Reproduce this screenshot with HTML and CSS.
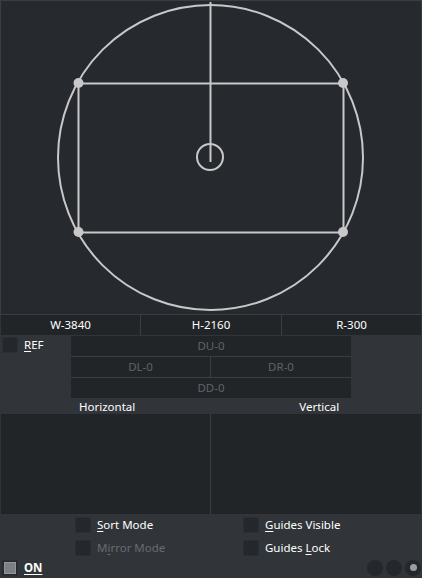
FILE: index.html
```html
<!DOCTYPE html>
<html>
<head>
<meta charset="utf-8">
<link rel="stylesheet" href="styles.css">
</head>
<body>
<div class="panel">
  <div class="canvas">
    <svg width="420" height="313" viewBox="1 1 420 313">
      <g fill="none" stroke="#c8c8c8" stroke-width="2">
        <circle cx="210.5" cy="157.5" r="152.5"/>
        <rect x="78.5" y="83.5" width="265" height="149"/>
        <line x1="210.5" y1="2" x2="210.5" y2="162"/>
        <circle cx="210" cy="157" r="13"/>
      </g>
      <g fill="#c8c8c8">
        <circle cx="78.5" cy="83" r="5"/>
        <circle cx="343" cy="83" r="5"/>
        <circle cx="78.5" cy="232" r="5"/>
        <circle cx="343" cy="232" r="5"/>
      </g>
    </svg>
  </div>
  <div class="dims">
    <div class="dim">W-3840</div>
    <div class="dim">H-2160</div>
    <div class="dim">R-300</div>
  </div>
  <div class="refrow">
    <div class="refcheck">
      <span class="box"></span>
      <span class="lbl"><u>R</u>EF</span>
    </div>
    <div class="offsets">
      <div class="off wide">DU-0</div>
      <div class="off">DL-0</div>
      <div class="off">DR-0</div>
      <div class="off wide">DD-0</div>
    </div>
  </div>
  <div class="heads">
    <div class="head h1">Horizontal</div>
    <div class="head h2">Vertical</div>
  </div>
  <div class="lists">
    <div class="list"></div>
    <div class="list"></div>
  </div>
  <div class="opts">
    <div class="opt"><span class="box"></span><span class="lbl"><u>S</u>ort Mode</span></div>
    <div class="opt"><span class="box"></span><span class="lbl"><u>G</u>uides Visible</span></div>
    <div class="opt"><span class="box"></span><span class="lbl dis">M<u>i</u>rror Mode</span></div>
    <div class="opt"><span class="box"></span><span class="lbl">Guides <u>L</u>ock</span></div>
  </div>
  <div class="bottom">
    <div class="on"><span class="box onbox"><span class="fill"></span></span><span class="lbl bold"><u>ON</u></span></div>
    <div class="dots">
      <span class="dot"></span>
      <span class="dot"></span>
      <span class="dot"><span class="pip"></span></span>
    </div>
  </div>
</div>
</body>
</html>
```
FILE: styles.css
```css
* { box-sizing: border-box; }
html, body { margin: 0; padding: 0; }
body {
  background: #31353a;
  font-family: "Noto Sans", "Open Sans", sans-serif;
  font-size: 11.5px;
  color: #ffffff;
  width: 422px;
  height: 578px;
  overflow: hidden;
}
.panel { width: 422px; height: 578px; display: flex; flex-direction: column; }
.canvas {
  height: 316px;
  background: #26292e;
  border: 1px solid #3a3e44;
}
.canvas svg { display: block; }
.dims {
  display: grid;
  grid-template-columns: 139px 140px 139px;
  gap: 1px;
  height: 20px;
  margin: 0 1px;
  background: #3a3e44;
}
.dim {
  background: #222528;
  text-align: center;
  line-height: 20px;
}
.refrow { display: flex; height: 63px; padding-top: 1px; }
.refcheck { width: 71px; display: flex; align-items: flex-start; padding: 1px 0 0 2px; }
.box {
  display: inline-block;
  width: 16px;
  height: 16px;
  background: #24272b;
  border: 1px solid #2b2e32;
  flex: none;
}
.refcheck .lbl { margin-left: 6px; line-height: 16px; }
.offsets {
  width: 280px;
  display: grid;
  grid-template-columns: 139px 140px;
  gap: 1px;
  background: #3a3e44;
}
.off {
  background: #222528;
  color: #5f6368;
  text-align: center;
  line-height: 20px;
  height: 20px;
}
.off.wide { grid-column: 1 / 3; }
.heads { display: flex; height: 16px; line-height: 17px; }
.head.h1 { margin-left: 79px; }
.head.h2 { margin-left: 164px; }
.lists {
  display: grid;
  grid-template-columns: 209px 210px;
  gap: 1px;
  margin: 0 1px;
  height: 100px;
  background: #3a3e44;
}
.list { background: #222528; }
.opts {
  display: grid;
  grid-template-columns: 168px 170px;
  row-gap: 5px;
  padding: 3px 0 0 75px;
  height: 43px;
}
.opt { display: flex; align-items: center; height: 16px; }
.opt .lbl { margin-left: 6px; line-height: 16px; }
.dis { color: #676b70; }
.bottom { display: flex; justify-content: space-between; align-items: center; height: 21px; padding: 0 1px 0 2px; }
.on { display: flex; align-items: center; }
.onbox { display: flex; align-items: center; justify-content: center; background: #24272b; }
.onbox .fill { width: 12px; height: 12px; background: #7c7f83; border: 1px solid #95989c; }
.bold { font-weight: bold; margin-left: 6px; }
.dots { display: flex; gap: 3px; }
.dot {
  width: 16px; height: 16px; border-radius: 50%;
  background: #24272b;
  display: flex; align-items: center; justify-content: center;
}
.pip { width: 7px; height: 7px; border-radius: 50%; background: #9a9da1; }
u { text-decoration-thickness: 1px; text-underline-offset: 2px; }
```
